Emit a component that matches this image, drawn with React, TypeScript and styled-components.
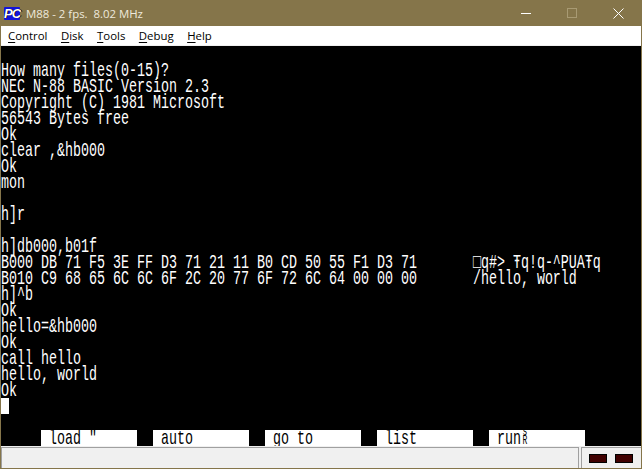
import React from "react";
import styled, { createGlobalStyle } from "styled-components";

const GlobalStyle = createGlobalStyle`
  html, body {
    margin: 0;
    padding: 0;
    background: #85754a;
  }
`;

const Window = styled.div`
  width: 642px;
  height: 469px;
  box-sizing: border-box;
  display: flex;
  flex-direction: column;
  border: 1px solid #85754a;
  border-top: none;
  overflow: hidden;
  font-family: "Open Sans", "Noto Sans", sans-serif;
`;

const TitleBar = styled.div`
  height: 26px;
  flex: none;
  display: flex;
  align-items: center;
  background: #85754a;
  color: #eee9dc;
  font-size: 11.4px;
  padding-left: 3px;
`;

const AppIcon = styled.span`
  width: 16px;
  height: 13px;
  flex: none;
  background: #1414d8;
  color: #fff;
  font: italic bold 13px/13px "Liberation Sans", sans-serif;
  letter-spacing: -1px;
  text-align: center;
  text-shadow: 1px 0 0 #000;
  border-radius: 1px;
  margin-right: 6px;
`;

const Title = styled.span`
  flex: 1;
  white-space: pre;
`;

const WindowButton = styled.span`
  width: 46px;
  height: 26px;
  display: flex;
  align-items: center;
  justify-content: center;
  flex: none;
`;

const Minimize = styled.span`
  width: 10px;
  height: 1px;
  background: #fff;
`;

const Maximize = styled.span`
  width: 8px;
  height: 8px;
  border: 1px solid #a89a73;
`;

const MenuBar = styled.div`
  height: 19px;
  flex: none;
  display: flex;
  align-items: center;
  background: #fff;
  border-bottom: 1px solid #f0f0f0;
  color: #000;
  font-size: 11.4px;
  padding-left: 7px;
  gap: 13.5px;
`;

const MenuItem = styled.span`
  line-height: 18px;
  u {
    text-underline-offset: 2px;
  }
`;

const Screen = styled.div`
  width: 640px;
  height: 400px;
  flex: none;
  background: #000;
  position: relative;
  padding-top: 16px;
  box-sizing: border-box;
`;

const Row = styled.div`
  height: 16px;
  color: #fff;
  font: 13.33px/16px "Liberation Mono", monospace;
  white-space: pre;
  transform: scaleY(1.5);
  transform-origin: 0 4.6px;
`;

const Cursor = styled.div`
  width: 8px;
  height: 16px;
  background: #fff;
`;

const FunctionKeys = styled.div`
  position: absolute;
  left: 40px;
  bottom: 0;
  display: flex;
  gap: 16px;
`;

const FunctionKey = styled.div`
  width: 96px;
  height: 16px;
  background: #fff;
  color: #000;
  font: 13.33px/16px "Liberation Mono", monospace;
  white-space: pre;
  overflow: hidden;
`;

const KeyLabel = styled.div`
  transform: scaleY(1.5);
  transform-origin: 0 4.6px;
`;

const StopGlyph = styled.span`
  display: inline-flex;
  flex-direction: column;
  width: 8px;
  height: 16px;
  vertical-align: top;
  font-size: 8px;
  line-height: 6px;
  text-align: center;
`;

const StatusBar = styled.div`
  flex: 1;
  display: flex;
  background: #f0f0f0;
  padding-top: 1px;
`;

const StatusMain = styled.div`
  flex: 1;
  border-top: 1px solid #a0a0a0;
  border-left: 1px solid #a0a0a0;
  border-right: 1px solid #a0a0a0;
  margin-right: 2px;
`;

const StatusLamps = styled.div`
  width: 57px;
  flex: none;
  display: flex;
  justify-content: center;
  align-items: center;
  gap: 8px;
  padding-right: 2px;
  border-top: 1px solid #a0a0a0;
  border-left: 1px solid #a0a0a0;
`;

const Lamp = styled.span`
  width: 16px;
  height: 7px;
  flex: none;
  background: #400000;
  border: 1px solid #000;
`;

const menus: [string, string][] = [
  ["C", "ontrol"],
  ["D", "isk"],
  ["T", "ools"],
  ["D", "ebug"],
  ["H", "elp"],
];

const lines = [
  "How many files(0-15)?",
  "NEC N-88 BASIC Version 2.3",
  "Copyright (C) 1981 Microsoft",
  "56543 Bytes free",
  "Ok",
  "clear ,&hb000",
  "Ok",
  "mon",
  "",
  "h]r",
  "",
  "h]db000,b01f",
  "B000 DB 71 F5 3E FF D3 71 21 11 B0 CD 50 55 F1 D3 71       □q#> Ŧq!q-^PUAŦq",
  "B010 C9 68 65 6C 6C 6F 2C 20 77 6F 72 6C 64 00 00 00       /hello, world",
  "h]^b",
  "Ok",
  "hello=&hb000",
  "Ok",
  "call hello",
  "hello, world",
  "Ok",
];

const keys = [" load \"", " auto", " go to", " list", " run"];

const App: React.FC = () => {
  return (
    <>
      <GlobalStyle />
      <Window>
        <TitleBar>
          <AppIcon>PC</AppIcon>
          <Title>M88 - 2 fps.  8.02 MHz</Title>
          <WindowButton>
            <Minimize />
          </WindowButton>
          <WindowButton>
            <Maximize />
          </WindowButton>
          <WindowButton>
            <svg width="11" height="11" viewBox="0 0 11 11">
              <path d="M0.5 0.5L10.5 10.5M10.5 0.5L0.5 10.5" stroke="#fff" strokeWidth="1" fill="none" />
            </svg>
          </WindowButton>
        </TitleBar>
        <MenuBar>
          {menus.map(([key, rest], index) => (
            <MenuItem key={index}>
              <u>{key}</u>
              {rest}
            </MenuItem>
          ))}
        </MenuBar>
        <Screen>
          {lines.map((line, index) => (
            <Row key={index}>{line}</Row>
          ))}
          <Cursor />
          <FunctionKeys>
            {keys.map((label, index) => (
              <FunctionKey key={label}>
                <KeyLabel>
                  {label}
                  {index === 4 && (
                    <StopGlyph>
                      <span>s</span>
                      <span>R</span>
                    </StopGlyph>
                  )}
                </KeyLabel>
              </FunctionKey>
            ))}
          </FunctionKeys>
        </Screen>
        <StatusBar>
          <StatusMain />
          <StatusLamps>
            <Lamp />
            <Lamp />
          </StatusLamps>
        </StatusBar>
      </Window>
    </>
  );
};

export default App;
